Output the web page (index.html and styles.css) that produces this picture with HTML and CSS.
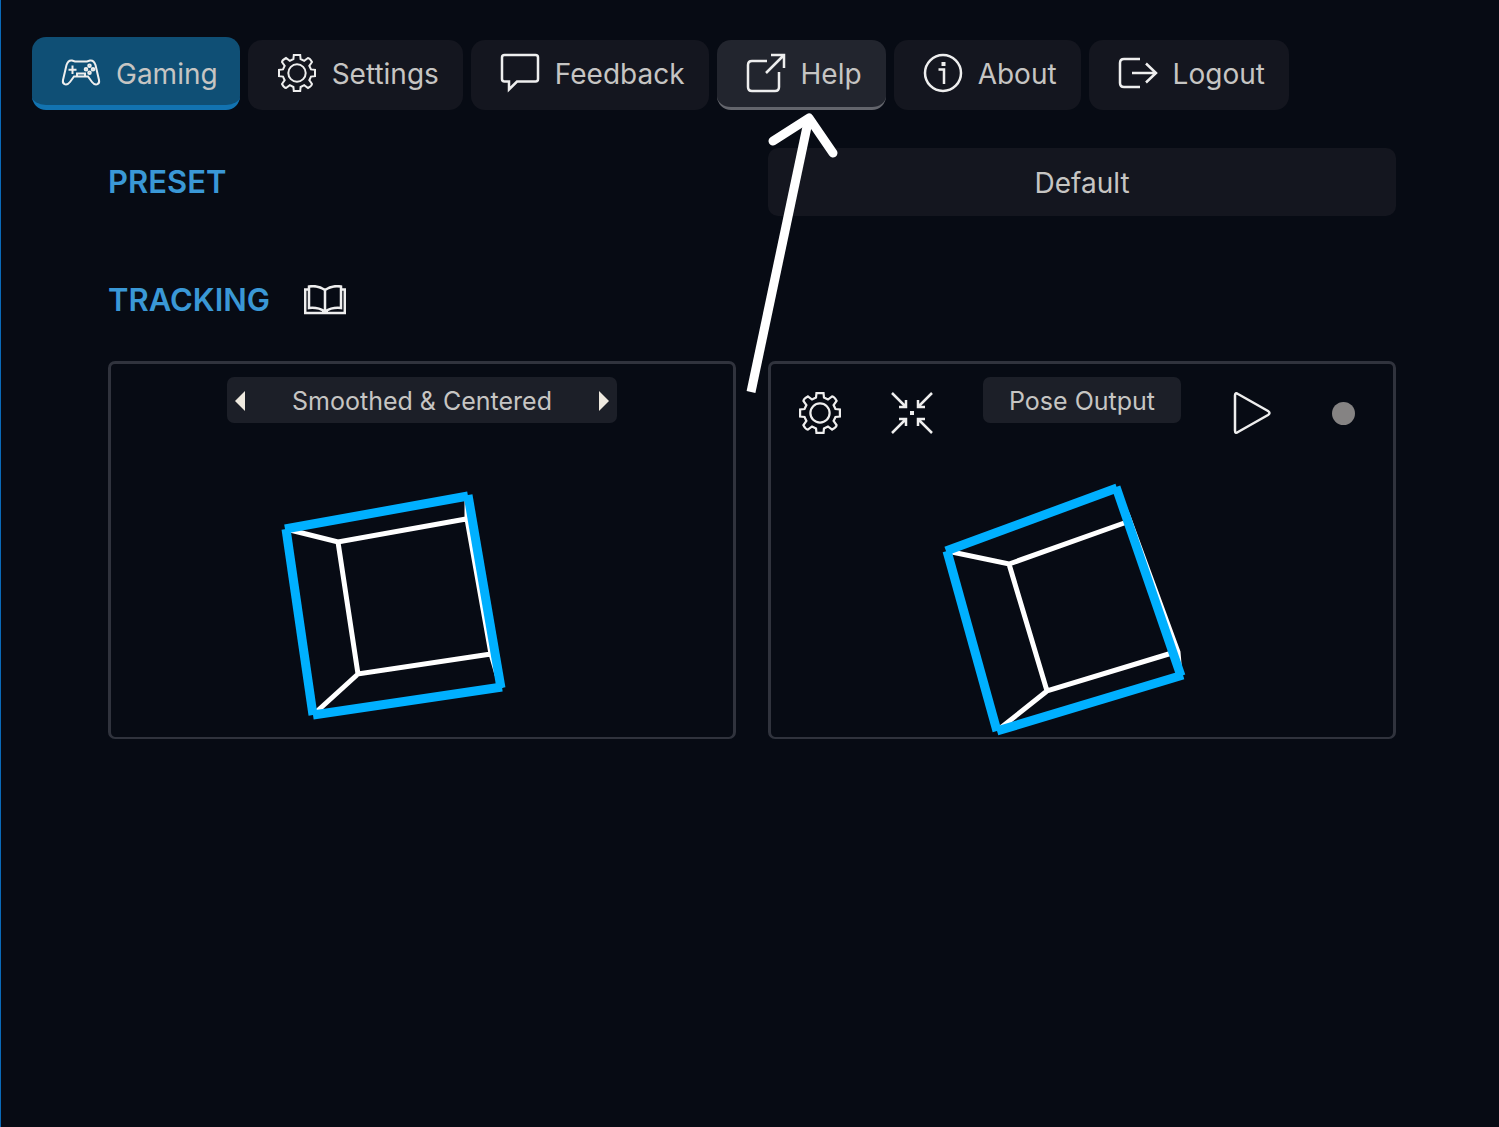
FILE: index.html
```
<!DOCTYPE html>
<html lang="en">
<head>
  <meta charset="UTF-8" />
  <meta name="viewport" content="width=device-width, initial-scale=1.0"/>
  <title>Gaming – Head Tracking</title>
  <link rel="stylesheet" href="styles.css">
</head>
<body>
  <svg class="symbols" aria-hidden="true">
    <symbol id="gear" viewBox="-19 -19 38 38">
      <path d="M-3.2-18H3.2L3.6-14 7.2-12.2 11-15Q13-14.8 15-11L12.3-7.2 14-3.6 18-3.2V3.2L14 3.6 12.3 7.2 15 11Q14.8 13 11 15L7.2 12.2 3.6 14 3.2 18H-3.2L-3.6 14-7.2 12.2-11 15Q-13 14.8-15 11L-12.3 7.2-14 3.6-18 3.2V-3.2L-14-3.6-12.3-7.2-15-11Q-14.8-13-11-15L-7.2-12.2-3.6-14Z"/>
      <circle r="8.7"/>
    </symbol>
  </svg>

  <nav class="tabs">
    <a class="tab active" href="#gaming">
      <svg class="icon thin" viewBox="0 0 38 38">
        <path d="M10 6.500C7 6 5.500 8 4.500 11L1 26C0 31 5 32 8 28L12 22.500H26L30 28C33 32 38 31 37 26L33.500 11C32.500 8 31 6 28 6.500L25 7.500H13Z"/>
        <path d="M10.500 11.500V20M6.500 15.700H14.500M15 22V19.500H23V22"/>
        <circle cx="27.500" cy="11.700" r="1.300"/><circle cx="24" cy="15.200" r="1.300"/><circle cx="31" cy="15.200" r="1.300"/><circle cx="27.500" cy="18.700" r="1.300"/>
      </svg>
      <span>Gaming</span>
    </a>
    <a class="tab" href="#settings">
      <svg class="icon thin"><use href="#gear"/></svg>
      <span>Settings</span>
    </a>
    <a class="tab" href="#feedback">
      <svg class="icon" viewBox="0 0 38 38">
        <path d="M3.500 1H34.500Q37 1 37 3.500V25Q37 27.500 34.500 27.500H16L8 35.500V27.500H3.500Q1 27.500 1 25V3.500Q1 1 3.500 1Z"/>
      </svg>
      <span>Feedback</span>
    </a>
    <a class="tab hovered" href="#help">
      <svg class="icon" viewBox="0 0 38 38">
        <path d="M20 7H5Q1 7 1 11V33Q1 37 5 37H28Q32 37 32 33V18M19 19L36 2M24 1H37V14"/>
      </svg>
      <span>Help</span>
      <svg class="pointer" viewBox="745 108 100 290" aria-hidden="true">
        <path d="M752 392L809 122"/>
        <path class="head" d="M774 141L810 118L834 153"/>
      </svg>
    </a>
    <a class="tab" href="#about">
      <svg class="icon" viewBox="0 0 38 38">
        <circle cx="19" cy="19" r="18"/>
        <path d="M14.500 15.500H20V30"/><path class="dot" d="M17.500 8h4v4h-4z"/>
      </svg>
      <span>About</span>
    </a>
    <a class="tab" href="#logout">
      <svg class="icon" viewBox="0 0 38 38">
        <path d="M21 5H5Q1 5 1 9V29Q1 33 5 33H21M13 19H37M27 9.500L37 19L27 28.500"/>
      </svg>
      <span>Logout</span>
    </a>
  </nav>

  <main class="content">
    <div class="row">
      <label class="heading" for="preset">PRESET</label>
      <select id="preset" class="preset">
        <option>Default</option>
      </select>
    </div>

    <div class="section">
      <h2 class="heading">TRACKING</h2>
      <a class="guide" href="#guide" aria-label="Tracking guide">
        <svg viewBox="0 0 42 30">
          <path d="M21 5Q14 0 5 1.500V23Q14 22 21 26.500Q28 22 37 23V1.500Q28 0 21 5V27M5 4.500H1.200V28H40.800V4.500H37"/>
          <path class="dot" d="M18 26h6v3h-6z"/>
        </svg>
      </a>
    </div>

    <div class="row">
      <section class="panel">
        <div class="panel-bar centered">
          <div class="switcher">
            <button aria-label="Previous view"><svg viewBox="0 0 10 20"><path d="M10 0V20L0 10Z"/></svg></button>
            <span>Smoothed &amp; Centered</span>
            <button aria-label="Next view"><svg viewBox="0 0 10 20"><path d="M0 0V20L10 10Z"/></svg></button>
          </div>
        </div>
        <svg class="cube" viewBox="272 478 300 258">
          <path class="back" d="M286 529L338 542L466 519M338 542L358 674L491 654M358 674L314 714M467 496L467 519L491 654L501 688"/>
          <path class="front" d="M285 529L468 496"/>
          <path class="front" d="M468 495L501 688"/>
          <path class="front" d="M502 687L313 715"/>
          <path class="front" d="M313 715L286 529"/>
        </svg>
      </section>

      <section class="panel">
        <div class="panel-bar">
          <button class="tool thin" aria-label="Output settings"><svg><use href="#gear"/></svg></button>
          <button class="tool" aria-label="Center">
            <svg viewBox="0 0 42 42">
              <path d="M1 1L15 15M41 1L27 15M1 41L15 27M41 41L27 27M8 15H15V8M27 8V15H34M8 27H15V34M27 34V27H34"/>
              <path class="dot" d="M19 19h4v4h-4z"/>
            </svg>
          </button>
          <button class="pill">Pose Output</button>
          <button class="tool" aria-label="Start">
            <svg viewBox="0 0 42 42"><path d="M4 3.500Q4 0 7 2L37 19Q40 21 37 23L7 40Q4 42 4 38.500Z"/></svg>
          </button>
          <span class="tool" role="img" aria-label="Stopped"><span class="status"></span></span>
        </div>
        <svg class="cube" viewBox="932 478 300 258">
          <path class="back" d="M947 551L1009 564L1127 522M1009 564L1047 691L1172 653M1047 691L998 730M1116 488L1128 516L1178 652L1180 675"/>
          <path class="front" d="M946 551L1117 488"/>
          <path class="front" d="M1116 487L1181 676"/>
          <path class="front" d="M1183 675L997 731"/>
          <path class="front" d="M997 731L947 551"/>
        </svg>
      </section>
    </div>
  </main>
</body>
</html>
```
FILE: styles.css
```
* {
  box-sizing: border-box;
}

body {
  font-family: Inter, 'Liberation Sans', sans-serif;
  font-size: 28px;
  line-height: 34px;
  background-color: #070b14;
  color: #c6c5c3;
  border-left: 1px solid #0a6ab8;
  min-height: 100vh;
  margin: 0;
}

.symbols {
  display: block;
  width: 0;
  height: 0;
}

svg {
  fill: none;
  stroke: #eeeeee;
  stroke-width: 2.5;
}

.thin svg,
svg.thin {
  stroke-width: 2;
}

.dot {
  fill: #eeeeee;
  stroke: none;
}

.tabs {
  display: flex;
  align-items: flex-end;
  gap: 8px;
  padding: 37px 31px 0;
}

.tab {
  position: relative;
  display: flex;
  align-items: center;
  gap: 16px;
  padding: 14px 24px 15px 30px;
  background-color: #14161f;
  border-bottom: 3px solid transparent;
  border-radius: 14px;
  color: inherit;
  text-decoration: none;
}

.tab span {
  padding-top: 2px;
}

.tab.active {
  padding: 17px 22px 13px 30px;
  background-color: #0f4f75;
  border-bottom: 5px solid #1273b1;
}

.tab.hovered {
  background-color: #22252e;
  border-bottom-color: #63656c;
}

.icon {
  width: 38px;
  height: 38px;
  overflow: visible;
}

/* arrow that points at the Help tab */
.pointer {
  position: absolute;
  top: 68px;
  left: 27px;
  z-index: 1;
  width: 100px;
  height: 290px;
  stroke: #ffffff;
  stroke-width: 9;
  pointer-events: none;
}

.head {
  stroke-linecap: round;
  stroke-linejoin: round;
}

.content {
  padding: 38px 103px 40px 107px;
}

.row {
  display: grid;
  grid-template-columns: 1fr 1fr;
  align-items: center;
  gap: 32px;
}

.heading {
  margin: 0;
  font-size: 31px;
  font-weight: 600;
  color: #3a98d6;
}

.preset {
  appearance: none;
  width: 100%;
  height: 68px;
  padding: 2px 0 0;
  background-color: #14161f;
  border: none;
  border-radius: 10px;
  color: inherit;
  font: inherit;
  text-align: center;
  text-align-last: center;
}

.section {
  display: flex;
  align-items: center;
  gap: 34px;
  padding: 67px 0 44px;
}

.guide {
  display: flex;
}

.guide svg {
  width: 42px;
  height: 30px;
}

.panel {
  border: 3px solid #30333d;
  border-bottom-width: 2px;
  border-radius: 7px;
  padding: 13px 28px 1px;
}

.panel-bar {
  display: flex;
  align-items: flex-start;
  justify-content: space-between;
  height: 60px;
  font-size: 25px;
}

.panel-bar.centered {
  justify-content: center;
}

.panel button {
  border: none;
  color: inherit;
  font: inherit;
}

.switcher {
  display: flex;
  align-items: center;
  justify-content: space-between;
  width: 390px;
  height: 46px;
  padding-top: 2px;
  background-color: #1c1f28;
  border-radius: 7px;
}

.switcher button {
  display: flex;
  padding: 12px 8px;
  background: none;
}

.switcher svg {
  width: 10px;
  height: 20px;
  fill: #eee9df;
  stroke: none;
}

.panel .pill {
  height: 46px;
  padding: 2px 26px 0;
  background-color: #1c1f28;
  border-radius: 7px;
}

.panel .tool {
  display: flex;
  align-items: center;
  justify-content: center;
  width: 42px;
  height: 42px;
  margin-top: 15px;
  padding: 0;
  background: none;
}

.tool svg {
  width: 42px;
  height: 42px;
}

.status {
  width: 23px;
  height: 23px;
  background-color: #858383;
  border-radius: 50%;
}

.cube {
  display: block;
  width: 300px;
  height: 258px;
  margin: 41px auto 0;
}

.back {
  stroke: #ffffff;
  stroke-width: 5;
}

.front {
  stroke: #00b0ff;
  stroke-width: 9;
}
```
